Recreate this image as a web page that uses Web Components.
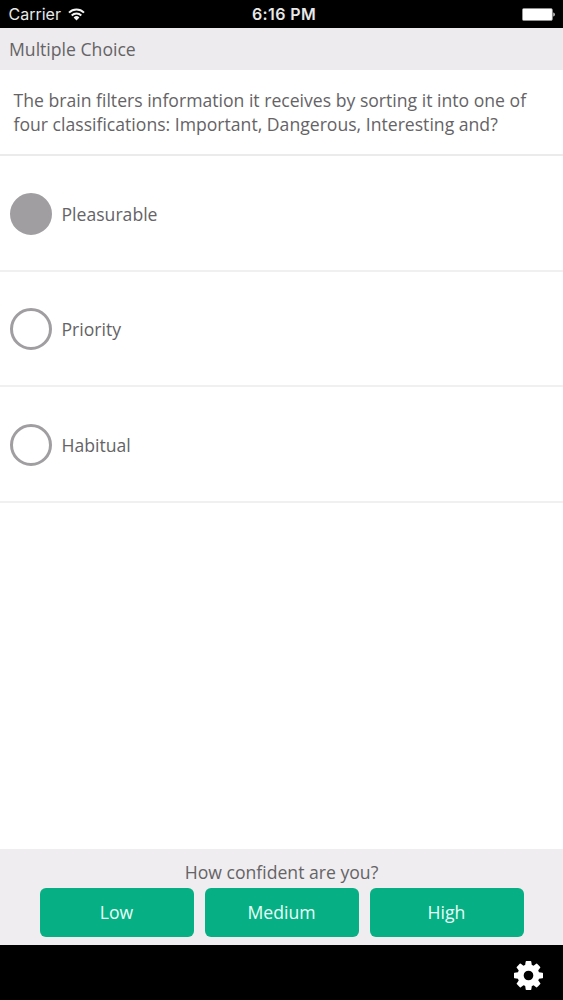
<!DOCTYPE html>
<html lang="en">
<head>
<meta charset="utf-8">
<title>Multiple Choice</title>
<style>
	html, body {
		height: 100%;
		margin: 0;
	}

	body {
		background: #fff;
		color: #656366;
		font: 17.62px/24px "Open Sans", "Noto Sans", sans-serif;
	}
</style>
</head>
<body>
<quiz-screen>
	<status-bar slot="top" carrier="Carrier" time="6:16 PM"></status-bar>
	<title-bar slot="top">Multiple Choice</title-bar>
	<quiz-question>The brain filters information it receives by sorting it into one of four classifications: Important, Dangerous, Interesting and?</quiz-question>
	<quiz-option selected>Pleasurable</quiz-option>
	<quiz-option>Priority</quiz-option>
	<quiz-option>Habitual</quiz-option>
	<confidence-panel slot="bottom" label="How confident are you?">
		<confidence-button>Low</confidence-button>
		<confidence-button>Medium</confidence-button>
		<confidence-button>High</confidence-button>
	</confidence-panel>
	<tool-bar slot="bottom"></tool-bar>
</quiz-screen>

<script>
const define = (name, html, setup) => {
	const template = document.createElement('template');
	template.innerHTML = html;

	customElements.define(name, class extends HTMLElement {
		constructor() {
			super();
			this
				.attachShadow({ mode: 'open' })
				.appendChild(template.content.cloneNode(true));
		}

		connectedCallback() {
			if (setup) {
				setup(this, this.shadowRoot);
			}
		}
	});
};

define('quiz-screen', `
	<style>
		:host {
			display: flex;
			flex-direction: column;
			height: 100vh;
			overflow: hidden;
		}

		main {
			flex: 1;
			min-height: 0;
		}
	</style>
	<slot name="top"></slot>
	<main><slot></slot></main>
	<slot name="bottom"></slot>
`);

define('status-bar', `
	<style>
		:host {
			box-sizing: border-box;
			display: grid;
			grid-template-columns: 1fr auto 1fr;
			align-items: center;
			height: 28px;
			padding: 0 8px 0 9px;
			background: #000;
			color: #e8e8e8;
			font: 16px/26px Inter, Roboto, sans-serif;
		}

		.network {
			display: flex;
			align-items: center;
			gap: 7px;
		}

		.carrier {
			margin-left: -.5px;
		}

		.time {
			padding-left: 4px;
			font-weight: 600;
			letter-spacing: .4px;
		}

		.battery {
			justify-self: end;
			margin-top: 1px;
		}

		svg {
			display: block;
		}
	</style>
	<div class="network">
		<span class="carrier"></span>
		<svg width="17" height="13" viewBox="0 0 17 13" fill="none" stroke="#f4f4f4" stroke-width="2">
			<path d="M1 4.6a10.7 10.7 0 0 1 15 0M3.7 7.5a6.9 6.9 0 0 1 9.6 0"/>
			<path d="M8.5 12.4L5.6 9.4a4.1 4.1 0 0 1 5.8 0z" fill="#f4f4f4" stroke="none"/>
		</svg>
	</div>
	<span class="time"></span>
	<svg class="battery" width="33" height="13" viewBox="0 0 33 13">
		<rect x=".4" y=".4" width="30" height="12.2" rx="1.5" fill="#fff" stroke="#999" stroke-width=".7"/>
		<path d="M31.3 4.5c2 .5 2 3.5 0 4z" fill="#ddd"/>
	</svg>
`, (host, root) => {
	root.querySelector('.carrier').textContent = host.getAttribute('carrier');
	root.querySelector('.time').textContent = host.getAttribute('time');
});

define('title-bar', `
	<style>
		:host {
			display: block;
			box-sizing: border-box;
			height: 42px;
			padding: 9px 9px 0;
			background: #edebee;
		}
	</style>
	<slot></slot>
`);

define('quiz-question', `
	<style>
		:host {
			display: block;
			box-sizing: border-box;
			height: 86px;
			padding: 18px 14px 0 13.5px;
			border-bottom: 2px solid #ebebeb;
		}
	</style>
	<slot></slot>
`);

define('quiz-option', `
	<style>
		:host {
			display: flex;
			align-items: center;
			gap: 10px;
			box-sizing: border-box;
			height: 115.5px;
			padding: 2.2px 0 0 9.5px;
			border-bottom: 2px solid #f0f0f0;
		}

		.mark {
			box-sizing: border-box;
			width: 42px;
			height: 42px;
			border: 3px solid #a09ea1;
			border-radius: 50%;
		}

		:host([selected]) .mark {
			background: #a09ea1;
		}
	</style>
	<span class="mark"></span>
	<span><slot></slot></span>
`);

define('confidence-panel', `
	<style>
		:host {
			display: block;
			box-sizing: border-box;
			height: 96px;
			padding: 11px 39.5px 0;
			background: #efedf0;
			text-align: center;
		}

		.label {
			height: 28px;
		}

		.buttons {
			display: grid;
			grid-template-columns: repeat(3, 1fr);
			gap: 11px;
		}
	</style>
	<div class="label"></div>
	<div class="buttons"><slot></slot></div>
`, (host, root) => {
	root.querySelector('.label').textContent = host.getAttribute('label');
});

define('confidence-button', `
	<style>
		:host {
			display: block;
			height: 49px;
			border-radius: 6px;
			background: #06b084;
			color: #e6fff8;
			line-height: 49px;
		}
	</style>
	<slot></slot>
`);

define('tool-bar', `
	<style>
		:host {
			display: flex;
			align-items: center;
			justify-content: flex-end;
			box-sizing: border-box;
			height: 55px;
			padding: 5px 20px 0 0;
			background: #000;
		}
	</style>
	<svg width="29" height="29" viewBox="0 -128 1536 1536" fill="#fff">
		<path d="M1024 640q0-106-75-181t-181-75-181 75-75 181 75 181 181 75 181-75 75-181zm512-109v222q0 12-8 23t-20 13l-185 28q-19 54-39 91 35 50 107 138 10 12 10 25t-9 23q-27 37-99 108t-94 71q-12 0-26-9l-138-108q-44 23-91 38-16 136-29 186-7 28-36 28h-222q-14 0-24.5-8.5t-11.5-21.5l-28-184q-49-16-90-37l-141 107q-10 9-25 9-14 0-25-11-126-114-165-168-7-10-7-23 0-12 8-23 15-21 51-66.5t54-70.5q-27-50-41-99l-183-27q-13-2-21-12.5t-8-23.5v-222q0-12 8-23t19-13l186-28q14-46 39-92-40-57-107-138-10-12-10-24 0-10 9-23 26-36 98.5-107.5t94.5-71.5q13 0 26 10l138 107q44-23 91-38 16-136 29-186 7-28 36-28h222q14 0 24.5 8.5t11.5 21.5l28 184q49 16 90 37l142-107q9-9 24-9 13 0 25 10 129 119 165 170 7 8 7 22 0 12-8 23-15 21-51 66.5t-54 70.5q26 50 41 98l183 28q13 2 21 12.5t8 23.5z"/>
	</svg>
`);
</script>
</body>
</html>
